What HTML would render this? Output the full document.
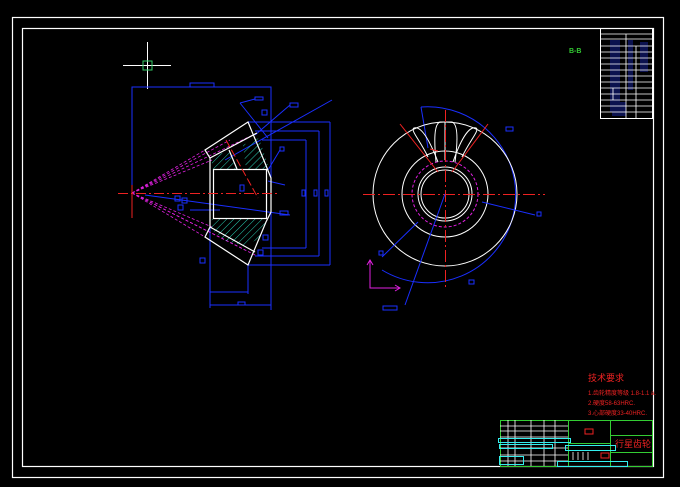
<!DOCTYPE html>
<html><head><meta charset="utf-8"><style>
html,body{margin:0;padding:0;background:#000;width:680px;height:487px;overflow:hidden}
svg{display:block}
text{font-family:"Liberation Sans","Noto Sans CJK SC",sans-serif}
</style></head><body>
<svg width="680" height="487" viewBox="0 0 680 487">
<rect width="680" height="487" fill="#000"/>
<rect x="12.5" y="17.5" width="651" height="460" fill="none" stroke="#fff" stroke-width="1.2"/>
<rect x="22.5" y="28.5" width="631" height="438" fill="none" stroke="#fff" stroke-width="1.2"/>

<g stroke="#fff"><line x1="123" y1="65.5" x2="171" y2="65.5"/><line x1="147.5" y1="42" x2="147.5" y2="89"/></g>
<rect x="143" y="61" width="9" height="9" fill="none" stroke="#3c6"/>

<g stroke="#1a2fff" fill="none" stroke-width="1">
<polyline points="132,195 132,87 271,87 271,310"/>
<rect x="190" y="83" width="24" height="4"/>
<line x1="248" y1="122" x2="330" y2="122"/><line x1="330" y1="122" x2="330" y2="265"/><line x1="248" y1="265" x2="330" y2="265"/>
<line x1="255" y1="131" x2="319" y2="131"/><line x1="319" y1="131" x2="319" y2="256"/><line x1="255" y1="256" x2="319" y2="256"/>
<line x1="262" y1="140" x2="306" y2="140"/><line x1="306" y1="140" x2="306" y2="248"/><line x1="262" y1="248" x2="306" y2="248"/>
<rect x="302" y="190" width="3" height="6"/><rect x="314" y="190" width="3" height="6"/><rect x="325" y="190" width="3" height="6"/>
<line x1="210" y1="228" x2="210" y2="308"/><line x1="248" y1="265" x2="248" y2="294"/>
<line x1="210" y1="292" x2="248" y2="292"/><line x1="210" y1="305" x2="271" y2="305"/>
<rect x="238" y="302" width="7" height="3"/>
<line x1="240" y1="103" x2="255" y2="99"/><rect x="255" y="97" width="8" height="3"/>
<line x1="240" y1="103" x2="268" y2="138"/>
<line x1="255" y1="135" x2="290" y2="105"/><rect x="290" y="103" width="8" height="4"/>
<line x1="225" y1="160" x2="332" y2="100"/>
<line x1="268" y1="170" x2="280" y2="150"/><rect x="280" y="147" width="4" height="4"/>
<line x1="268" y1="181" x2="285" y2="185"/><line x1="145" y1="195" x2="290" y2="215"/><rect x="280" y="211" width="8" height="4"/>
<line x1="190" y1="210" x2="220" y2="210"/>
<rect x="175" y="196" width="5" height="5"/><rect x="182" y="198" width="5" height="5"/><rect x="178" y="205" width="5" height="5"/>
<rect x="240" y="185" width="4" height="6"/>
<rect x="200" y="258" width="5" height="5"/><rect x="258" y="250" width="5" height="5"/><rect x="263" y="235" width="5" height="5"/><rect x="262" y="110" width="5" height="5"/>
</g>
<g stroke="#e020e0" stroke-width="0.8" stroke-dasharray="3,2">
<line x1="132" y1="193" x2="205" y2="150"/><line x1="132" y1="193" x2="230" y2="140"/><line x1="132" y1="193" x2="257" y2="133"/><line x1="132" y1="193" x2="212" y2="160"/>
<line x1="132" y1="193" x2="205" y2="237"/><line x1="132" y1="193" x2="245" y2="250"/><line x1="132" y1="193" x2="257" y2="256"/><line x1="132" y1="193" x2="212" y2="227"/>
</g>
<defs><pattern id="h" width="5" height="5" patternUnits="userSpaceOnUse" patternTransform="rotate(45)"><line x1="0" y1="0" x2="0" y2="5" stroke="#3fd" stroke-width="0.8"/></pattern></defs>
<polygon points="211,158 229,150 236,169 213,169" fill="url(#h)"/>
<polygon points="243,145 259,138 268,165 266,169 246,169" fill="url(#h)"/>
<polygon points="212,219 267,219 260,238 245,246 226,241 210,228" fill="url(#h)"/>
<g stroke="#fff" fill="none" stroke-width="1.2">
<polygon points="205,150 248,122 265,163 271,178 271,212 266,222 248,265 205,237 210,227 210,158"/>
<rect x="213.5" y="169.5" width="53" height="49"/>
<line x1="210" y1="158" x2="257" y2="133"/><line x1="229" y1="150" x2="237" y2="169"/>
<line x1="210" y1="227" x2="255" y2="252"/>
</g>
<g stroke="#e22" stroke-width="1"><line x1="118" y1="193.5" x2="280" y2="193.5" stroke-dasharray="10,3,2,3"/><line x1="132" y1="185" x2="132" y2="218"/><line x1="226" y1="140" x2="258" y2="198" stroke-dasharray="8,3"/></g>

<g fill="none">
<path d="M421,107 A88,88 0 1 1 382,270" stroke="#1a2fff"/>
<line x1="421" y1="107" x2="428" y2="148" stroke="#1a2fff"/>
<circle cx="445" cy="194" r="72" stroke="#fff"/>
<circle cx="445" cy="194" r="43" stroke="#fff"/>
<circle cx="445" cy="194" r="33" stroke="#e020e0" stroke-dasharray="3,2"/>
<circle cx="445" cy="194" r="27" stroke="#fff"/>
<circle cx="445" cy="194" r="24" stroke="#fff"/>
<g stroke="#fff"><path d="M436,162 C434,140 434,124 440,122 L452,122 C458,124 458,140 455,162"/>
<path d="M428,157 C420,140 410,130 414,128 C420,126 428,136 438,162"/>
<path d="M462,157 C470,140 480,130 476,128 C470,126 462,136 453,162"/>
<line x1="445" y1="122" x2="445" y2="160"/></g>
<g stroke="#e22"><line x1="363" y1="194.5" x2="545" y2="194.5" stroke-dasharray="12,3,2,3"/><line x1="445.5" y1="110" x2="445.5" y2="290" stroke-dasharray="12,3,2,3"/>
<line x1="400" y1="124" x2="438" y2="172"/><line x1="488" y1="124" x2="452" y2="172"/><line x1="430" y1="149" x2="438" y2="151"/></g>
<g stroke="#1a2fff"><line x1="445" y1="194" x2="405" y2="305"/><line x1="382" y1="257" x2="418" y2="222"/><line x1="482" y1="202" x2="535" y2="215"/>
<rect x="383" y="306" width="14" height="4"/><rect x="379" y="251" width="4" height="4"/><rect x="537" y="212" width="4" height="4"/><rect x="506" y="127" width="7" height="4"/><rect x="469" y="280" width="5" height="4"/></g>
<g stroke="#e020e0"><polyline points="370,260 370,288 400,288"/><polyline points="367,265 370,260 373,265"/><polyline points="395,285 400,288 395,291"/></g>
</g>

<g fill="#1a28b0" opacity="0.45"><rect x="610" y="40" width="10" height="72"/><rect x="628" y="40" width="5" height="50"/><rect x="640" y="42" width="8" height="30"/><rect x="612" y="102" width="14" height="14"/></g>
<g stroke="#fff" fill="none">
<rect x="600.5" y="28.5" width="52" height="90"/>
<g stroke-width="0.8">
<line x1="600" y1="34" x2="652" y2="34"/><line x1="600" y1="39" x2="652" y2="39"/><line x1="600" y1="46" x2="652" y2="46"/><line x1="600" y1="52" x2="652" y2="52"/><line x1="600" y1="58" x2="652" y2="58"/><line x1="600" y1="64" x2="652" y2="64"/><line x1="600" y1="70" x2="652" y2="70"/><line x1="600" y1="76" x2="652" y2="76"/><line x1="600" y1="82" x2="652" y2="82"/><line x1="600" y1="88" x2="652" y2="88"/><line x1="600" y1="94" x2="652" y2="94"/><line x1="600" y1="100" x2="652" y2="100"/><line x1="600" y1="106" x2="652" y2="106"/><line x1="600" y1="112" x2="652" y2="112"/>
<line x1="626" y1="34" x2="626" y2="118"/><line x1="636" y1="46" x2="636" y2="118"/><line x1="613" y1="88" x2="613" y2="100"/>
</g></g>
<text x="569" y="53" font-size="7" fill="#3c3" font-weight="bold">B-B</text>

<text x="588" y="381" font-size="9" fill="#e22">技术要求</text>
<text x="588" y="395" font-size="6" fill="#e22">1.齿轮精度等级 1.8-1.1 a.</text>
<text x="588" y="405" font-size="6" fill="#e22">2.硬度58-63HRC.</text>
<text x="588" y="415" font-size="6" fill="#e22">3.心部硬度33-40HRC.</text>

<g fill="none">
<g stroke="#3c3"><rect x="500.5" y="420.5" width="152" height="46"/><line x1="568.5" y1="420" x2="568.5" y2="466"/><line x1="610.5" y1="420" x2="610.5" y2="466"/><line x1="610" y1="435.5" x2="652" y2="435.5"/><line x1="610" y1="452.5" x2="652" y2="452.5"/><line x1="568" y1="443.5" x2="610" y2="443.5"/></g>
<g stroke="#fff" stroke-width="0.8"><line x1="500" y1="426" x2="568" y2="426"/><line x1="500" y1="431" x2="568" y2="431"/><line x1="500" y1="437" x2="568" y2="437"/><line x1="500" y1="448" x2="568" y2="448"/><line x1="500" y1="455" x2="568" y2="455"/><line x1="500" y1="461" x2="568" y2="461"/>
<line x1="508" y1="420" x2="508" y2="466"/><line x1="515" y1="420" x2="515" y2="466"/><line x1="531" y1="420" x2="531" y2="466"/><line x1="544" y1="420" x2="544" y2="466"/><line x1="555" y1="420" x2="555" y2="466"/><line x1="573" y1="452" x2="573" y2="460"/><line x1="578" y1="452" x2="578" y2="460"/><line x1="583" y1="452" x2="583" y2="460"/><line x1="588" y1="452" x2="588" y2="460"/></g>
<g stroke="#3ee"><rect x="498.5" y="438.5" width="72" height="4"/><rect x="499.5" y="444.5" width="53" height="4"/><rect x="565.5" y="445.5" width="50" height="5"/><rect x="499.5" y="456.5" width="24" height="8"/><rect x="557.5" y="461.5" width="70" height="5"/></g>
<rect x="585" y="429" width="8" height="5" stroke="#e22"/><rect x="601" y="453" width="8" height="5" stroke="#e22"/>
</g>
<text x="615" y="447" font-size="9" fill="#e22">行星齿轮</text>
</svg>
</body></html>
